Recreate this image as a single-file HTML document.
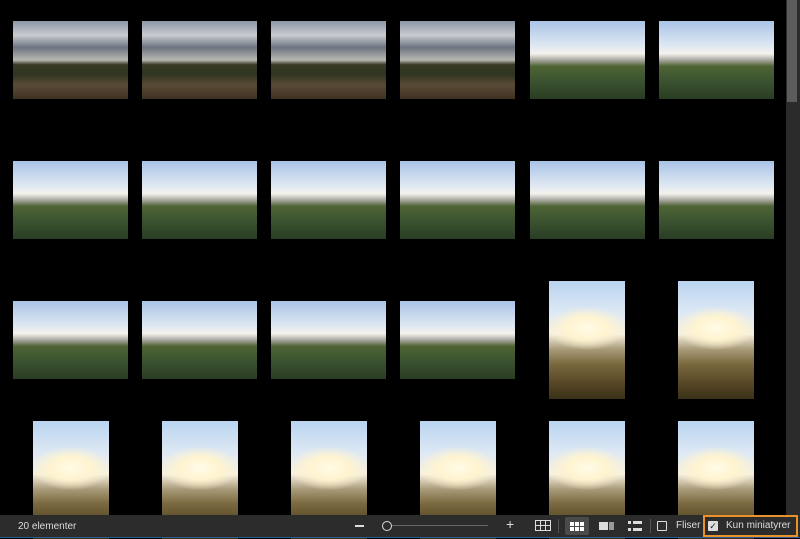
<!DOCTYPE html><html><head><style>
*{margin:0;padding:0;box-sizing:border-box}
body{width:800px;height:538px;background:#000;position:relative;overflow:hidden;font-family:"Liberation Sans",sans-serif}
.t{position:absolute;display:block}
.a{width:115px;height:78px;background:linear-gradient(180deg,#8a95a6 0%,#c9ccd0 18%,#6d7480 34%,#b8b8b2 50%,#3a3a26 56%,#2e3520 68%,#5a4a35 82%,#3e3222 100%)}
.b{width:115px;height:78px;background:linear-gradient(180deg,#a9c3e6 0%,#dce6f2 30%,#f3f1ec 42%,#a9a8a0 50%,#4f6435 58%,#3c5530 75%,#2a3d24 100%)}
.p{width:76px;height:118px;background:radial-gradient(ellipse 40px 22px at 50% 40%,#fffbe8 0%,#fff4d0 50%,rgba(255,240,200,0) 100%),linear-gradient(180deg,#b9d4f0 0%,#dfe9f4 28%,#f7f0e0 45%,#a89a78 58%,#7a6a40 70%,#5a4a28 85%,#3a3018 100%)}
.bar{position:absolute;left:0;top:515px;width:800px;height:23px;background:#2c2c2c;color:#ddd;font-size:10px}
</style></head><body>
<div id="g"></div>
<div style="position:absolute;left:786px;top:0;width:14px;height:515px;background:#2b2b2b"></div>
<div style="position:absolute;left:787px;top:0;width:10px;height:102px;background:#5c5c5c"></div>
<div class="bar">
<span class="t" style="left:18px;top:6px">20 elementer</span>
<span class="t" style="left:355px;top:10px;width:9px;height:1.5px;background:#ddd"></span>
<span class="t" style="left:382px;top:6px;width:10px;height:10px;border:1.5px solid #ddd;border-radius:50%"></span>
<span class="t" style="left:392px;top:10px;width:96px;height:1px;background:#666"></span>
<span class="t" style="left:506px;top:1px;font-size:14px">+</span>
<span class="t" style="left:535px;top:5px;width:16px;height:11px;border:1px solid #ddd;background:linear-gradient(90deg,transparent 4px,#ddd 4px,#ddd 5px,transparent 5px,transparent 9px,#ddd 9px,#ddd 10px,transparent 10px),linear-gradient(0deg,transparent 4px,#ddd 4px,#ddd 5px,transparent 5px)"></span>
<span class="t" style="left:558px;top:4px;width:1px;height:14px;background:#555"></span>
<span class="t" style="left:565px;top:2px;width:24px;height:18px;background:#4a4a4a;border-radius:2px"></span>
<span class="t" style="left:570px;top:7px;width:14px;height:9px;background:repeating-linear-gradient(90deg,#fff 0 4px,transparent 4px 5px)"></span>
<span class="t" style="left:570px;top:11px;width:14px;height:1px;background:#4a4a4a"></span>
<span class="t" style="left:599px;top:7px;width:9px;height:8px;background:#ddd"></span>
<span class="t" style="left:609px;top:7px;width:5px;height:8px;background:#999"></span>
<span class="t" style="left:628px;top:6px;width:14px;height:11px;background:linear-gradient(#ddd 0 3px,transparent 3px 7px,#ddd 7px 10px,transparent 10px);"></span>
<span class="t" style="left:631px;top:6px;width:2px;height:11px;background:#2c2c2c"></span>
<span class="t" style="left:650px;top:4px;width:1px;height:14px;background:#555"></span>
<span class="t" style="left:657px;top:6px;width:10px;height:10px;border:1.5px solid #ddd;border-radius:1px"></span>
<span class="t" style="left:676px;top:5px">Fliser</span>
<span class="t" style="left:703px;top:0;width:95px;height:22px;border:2px solid #e8912d"></span>
<span class="t" style="left:708px;top:6px;width:10px;height:10px;background:#ddd;border-radius:1px;color:#222;font-size:9px;line-height:10px;text-align:center">✓</span>
<span class="t" style="left:726px;top:5px">Kun miniatyrer</span>
</div>
<div style="position:absolute;left:0;top:537px;width:800px;height:1px;background:#2a5d8f"></div>
<script>
var g=document.getElementById('g'),h='';
var L=[13,142,271,400,530,659],P=[33,162,291,420,549,678];
for(var r=0;r<4;r++)for(var c=0;c<6;c++){
 var cls,x,y;
 if(r==0&&c<4){cls='a';x=L[c];y=21;}
 else if(r<2||(r==2&&c<4)){cls='b';x=L[c];y=21+140*r;}
 else{cls='p';x=P[c];y=281+140*(r-2);}
 h+='<div class="t '+cls+'" style="left:'+x+'px;top:'+y+'px"></div>';
}
g.innerHTML=h;
</script>
</body></html>
